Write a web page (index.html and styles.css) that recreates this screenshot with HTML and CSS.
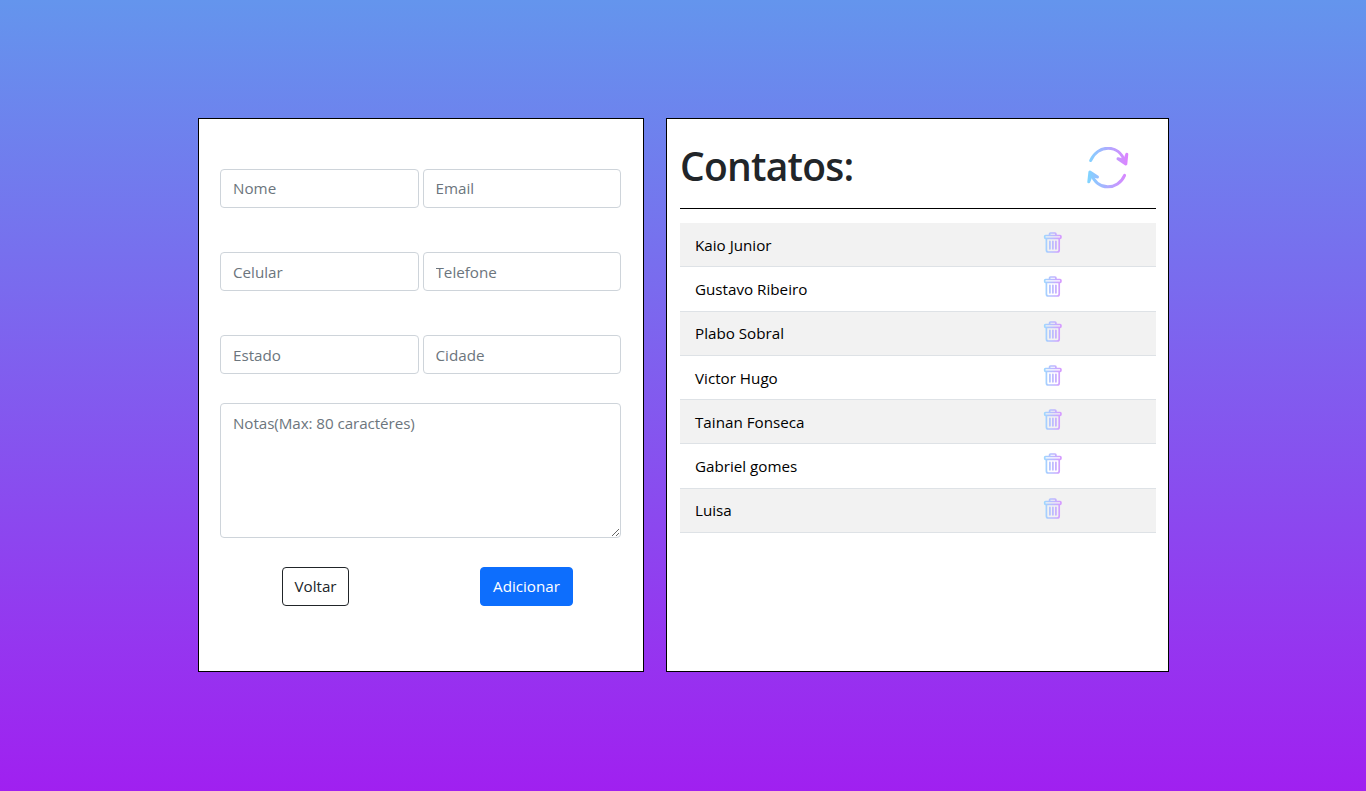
FILE: index.html
```html
<!DOCTYPE html>
<html lang="pt-br">
<head>
<meta charset="utf-8">
<title>Contatos</title>
<link rel="stylesheet" href="styles.css">
</head>
<body>
<svg class="defs" width="0" height="0" aria-hidden="true">
  <defs>
    <linearGradient id="fade" gradientUnits="userSpaceOnUse" x1="0" y1="0" x2="20" y2="0">
      <stop offset="0" stop-color="#9bdcff"/><stop offset="1" stop-color="#dc94ff"/>
    </linearGradient>
    <linearGradient id="fade-lg" gradientUnits="userSpaceOnUse" x1="0" y1="0" x2="42" y2="0">
      <stop offset="0" stop-color="#7dd6ff"/><stop offset="1" stop-color="#e080ff"/>
    </linearGradient>
    <symbol id="trash" viewBox="0 0 20 22">
      <g fill="none" stroke="url(#fade)" stroke-width="1.7" stroke-linejoin="round">
        <path d="M6.6 3.2V2Q6.6 1 7.5 1H12Q12.9 1 12.9 2V3.2"/>
        <rect x="1.7" y="3.5" width="16.2" height="2.8" rx=".8"/>
        <path d="M3.4 6.5V18Q3.4 20 5.2 20H14.3Q16.2 20 16.2 18V6.5"/>
        <path d="M6.9 9.3V16.8M9.9 9.3V16.8M12.9 9.3V16.8" stroke-linecap="round"/>
      </g>
    </symbol>
  </defs>
</svg>
<main class="page">
  <form class="panel form">
    <div class="fields">
      <input class="control first" placeholder="Nome">
      <input class="control first" placeholder="Email">
    </div>
    <div class="fields">
      <input class="control" placeholder="Celular">
      <input class="control" placeholder="Telefone">
    </div>
    <div class="fields">
      <input class="control" placeholder="Estado">
      <input class="control" placeholder="Cidade">
    </div>
    <textarea class="control notes" placeholder="Notas(Max: 80 caractéres)"></textarea>
    <div class="actions">
      <button type="button" class="btn btn-back">Voltar</button>
      <button type="button" class="btn btn-add">Adicionar</button>
    </div>
  </form>
  <section class="panel contacts">
    <header class="head">
      <h1 class="title">Contatos:</h1>
      <svg class="refresh" width="42" height="42" viewBox="0 0 42 42" fill="none" stroke="url(#fade-lg)" stroke-width="3" stroke-linecap="round" stroke-linejoin="round">
        <path d="M3.7 13.5C10.5-2.5 32-3.5 37.6 14.5"/>
        <path d="M37.6 28.3C31 43.5 10 44.5 4.2 26.5"/>
        <path d="M31 11.8L38.8 17L39.8 7.2L37.6 13.5Z" fill="url(#fade-lg)"/>
        <path d="M10.5 30L2.9 25L1.8 34.8L4.3 28.5Z" fill="url(#fade-lg)"/>
      </svg>
    </header>
    <ul class="list">
      <li class="row"><span class="name">Kaio Junior</span><svg class="trash"><use href="#trash"/></svg></li>
      <li class="row"><span class="name">Gustavo Ribeiro</span><svg class="trash"><use href="#trash"/></svg></li>
      <li class="row"><span class="name">Plabo Sobral</span><svg class="trash"><use href="#trash"/></svg></li>
      <li class="row"><span class="name">Victor Hugo</span><svg class="trash"><use href="#trash"/></svg></li>
      <li class="row"><span class="name">Tainan Fonseca</span><svg class="trash"><use href="#trash"/></svg></li>
      <li class="row"><span class="name">Gabriel gomes</span><svg class="trash"><use href="#trash"/></svg></li>
      <li class="row"><span class="name">Luisa</span><svg class="trash"><use href="#trash"/></svg></li>
    </ul>
  </section>
</main>
</body>
</html>
```
FILE: styles.css
```css
* { box-sizing: border-box; }
body {
  margin: 0;
  height: 791px;
  overflow: hidden;
  font-family: "Open Sans", "Noto Sans", sans-serif;
  font-size: 15.2px;
  line-height: 24px;
  color: #212529;
  background: linear-gradient(#6495ed, #a020f0);
}
.defs { display: block; }
.page {
  display: flex;
  gap: 22px;
  padding: 118px 0 0 198px;
}
.panel {
  height: 554px;
  background: #fff;
  border: 1px solid #000;
}
.form { width: 446px; padding: 50px 22px 0 21px; }
.fields { display: flex; gap: 4px; margin-bottom: 44px; }
.control {
  display: block;
  width: 100%;
  min-width: 0;
  height: 39px;
  padding: 6px 12px;
  font: inherit;
  color: #212529;
  background: #fff;
  border: 1px solid #ced4da;
  border-radius: 4px;
}
.first { padding: 5px 12px 7px; }
.control::placeholder { color: #6c757d; opacity: 1; }
.fields .control { flex: 1; }
.notes { height: 135px; margin-top: -15px; padding-top: 7px; resize: both; letter-spacing: -.07px; }
.actions {
  display: flex;
  justify-content: space-between;
  padding: 29px 48px 0 62px;
}
.btn {
  height: 39px;
  padding: 0 0 2px;
  font: inherit;
  border: 1px solid;
  border-radius: 4px;
}
.btn-back { width: 67px; color: #212529; border-color: #212529; background: #fff; }
.btn-add { width: 93px; color: #fff; border-color: #0d6efd; background: #0d6efd; }
.contacts { width: 503px; padding: 0 12px 0 13px; }
.head {
  display: flex;
  justify-content: space-between;
  height: 90px;
  padding: 23px 27px 0 0;
  border-bottom: 1px solid #000;
}
.title { margin: 0; font-size: 39px; line-height: 47px; font-weight: 600; letter-spacing: -.75px; }
.refresh { margin-top: 5px; }
.list { list-style: none; margin: 14px 0 0; padding: 0; }
.row {
  display: flex;
  justify-content: space-between;
  height: 44px;
  padding: 9px 93px 0 15px;
  color: #000;
  border-bottom: 1px solid #dee2e6;
}
.row:nth-child(4n + 2) { height: 45px; }
.row:nth-child(odd) { background: #f2f2f2; }
.name { padding-top: 1px; }
.row:nth-child(3) .name,
.row:nth-child(7) .name { padding-top: 0; }
.trash { width: 20px; height: 22px; }
```
